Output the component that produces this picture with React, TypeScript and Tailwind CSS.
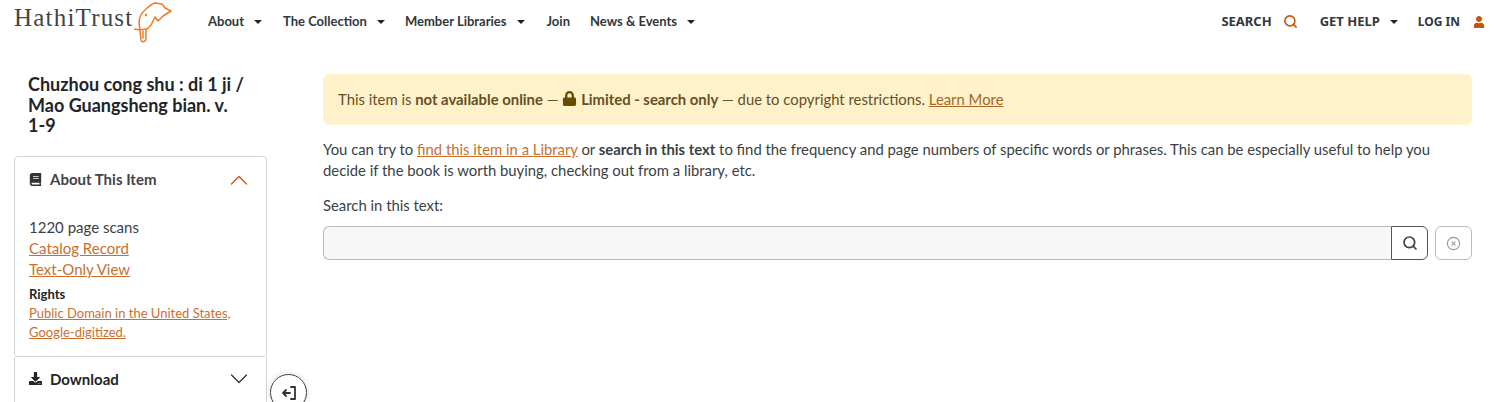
import { Search } from "lucide-react";
import { FaBook, FaDownload, FaLock, FaUser } from "react-icons/fa";

function Caret() {
  return <span className="ml-[10px] inline-block h-0 w-0 border-x-[4px] border-t-[4px] border-x-transparent border-t-[#212529]" />;
}

function NavItem({ label, caret = true, className = "" }: { label: string; caret?: boolean; className?: string }) {
  return (
    <span className={`flex items-center text-[13px] font-bold text-[#32373b] whitespace-nowrap ${className}`}>
      {label}
      {caret && <Caret />}
    </span>
  );
}

function Chevron({ up = false, color }: { up?: boolean; color: string }) {
  return (
    <svg viewBox="0 0 18 10" className="h-[10px] w-[18px]" fill="none" stroke={color} strokeWidth="1.3" strokeLinecap="round" strokeLinejoin="round">
      <path d={up ? "M1.5 9 9 1.5 16.5 9" : "M1.5 1 9 8.5 16.5 1"} />
    </svg>
  );
}

function Elephant() {
  return (
    <svg viewBox="0 0 38 42" className="h-[42px] w-[38px]" fill="none" stroke="#f27a26" strokeWidth="1.5" strokeLinejoin="round" strokeLinecap="round">
      <path d="M6 28 C4 20 6 13 11 9 C14 6 17 3 21 2 L28 3 L31 7 L37 10 L29 15 L24 20 L21 16 L17 24 L12 29 L12 37 C12 41 8 42 7 39 L6 29" />
      <path d="M0 28 C4 29 8 29 12 28" />
      <path d="M9 30 L9 37" />
      <circle cx="12" cy="14" r="0.5" />
    </svg>
  );
}

export default function App() {
  return (
    <div className="h-[402px] overflow-hidden bg-white font-['Lato','Noto_Sans',sans-serif] text-[#333]">
      {/* header */}
      <header className="flex h-[42px] items-start justify-between pl-[14px] pr-[15px]">
        <div className="flex items-start">
          <a className="flex items-start pt-[1px]">
            <span className="mt-[2px] w-[120px] font-['Liberation_Serif',serif] text-[25px] leading-[30px] tracking-[1.2px] text-[#444] whitespace-nowrap">HathiTrust</span>
            <Elephant />
          </a>
          <nav className="ml-[36px] mt-[12px] flex items-center gap-[20px]">
            <NavItem label="About" />
            <NavItem label="The Collection" className="ml-[1px]" />
            <NavItem label="Member Libraries" />
            <NavItem label="Join" caret={false} className="ml-[2px]" />
            <NavItem label="News & Events" />
          </nav>
        </div>
        <div className="mt-[12px] flex items-center font-['Noto_Sans',sans-serif] text-[13px] font-bold text-[#32373b]">
          <span>SEARCH</span>
          <Search className="ml-[11px] h-[15px] w-[15px] text-[#c4570e]" strokeWidth={2.5} />
          <span className="ml-[22px] flex items-center">GET HELP<Caret /></span>
          <span className="ml-[20px] text-[12px]">LOG IN</span>
          <FaUser className="ml-[13px] text-[12px] text-[#c4570e]" />
        </div>
      </header>

      <div className="flex">
        {/* sidebar */}
        <aside className="relative w-[267px] shrink-0 pl-[14px] pt-[32px]">
          <h1 className="pl-[14px] pr-[20px] text-[18px] font-bold leading-[20.5px] text-[#212529]">
            Chuzhou cong shu : di 1 ji / Mao Guangsheng bian. v. <span className="whitespace-nowrap">1-9</span>
          </h1>
          <div className="mt-[20px] h-[201px] rounded-[4px] border border-[#d5d5d5] px-[14px]">
            <div className="flex h-[46px] items-center justify-between">
              <span className="flex items-center gap-[8px] text-[15px] font-bold text-[#444]">
                <FaBook className="text-[13px] text-[#333]" />
                About This Item
              </span>
              <span className="mr-[4px]"><Chevron up color="#c4570e" /></span>
            </div>
            <div className="mt-[14px] text-[15px] leading-[21px] text-[#3a3f44]">
              <div>1220 page scans</div>
              <a className="block text-[#c9702f] underline">Catalog Record</a>
              <a className="block text-[#c9702f] underline">Text-Only View</a>
              <div className="mt-[4px] text-[13px] font-bold leading-[20px] text-[#212529]">Rights</div>
              <a className="block text-[13px] leading-[19px] text-[#c9702f] underline">
                Public Domain in the United States, Google-digitized.
              </a>
            </div>
          </div>
          <div className="flex h-[60px] items-start justify-between border-x border-[#d5d5d5] px-[14px] pt-[11px]">
            <span className="flex items-center gap-[8px] text-[15px] font-bold text-[#212529]">
              <FaDownload className="text-[13px]" />
              Download
            </span>
            <span className="mr-[4px] mt-[6px]"><Chevron color="#333" /></span>
          </div>
          <button className="absolute left-[270px] top-[332px] flex h-[37px] w-[37px] items-center justify-center rounded-full border border-[#444] bg-white shadow-[0_0_6px_rgba(0,0,0,0.15)]">
            <svg viewBox="0 0 16 16" className="h-[16px] w-[16px]" fill="none" stroke="#333" strokeWidth="1.8" strokeLinecap="round" strokeLinejoin="round">
              <path d="M9 8H2M5 5 2 8l3 3M10 2h4v12h-4" />
            </svg>
          </button>
        </aside>

        {/* main */}
        <main className="ml-[56px] mt-[32px] w-[1149px] text-[14.85px] leading-[21px] text-[#3a3f44]">
          <div className="flex h-[51px] items-center rounded-[6px] border border-[#fff3cd] bg-[#fff1c9] px-[14px] text-[#665026]">
            <span>
              This item is <b>not available online</b> — <FaLock className="inline align-[-1px] text-[15px] text-[#664d03]" /> <b>Limited - search only</b> — due to copyright restrictions. <a className="text-[#a8651f] underline">Learn More</a>
            </span>
          </div>
          <p className="mt-[14px]">
            You can try to <a className="text-[#c9702f] underline">find this item in a Library</a> or <b>search in this text</b> to find the frequency and page numbers of specific words or phrases. This can be especially useful to help you decide if the book is worth buying, checking out from a library, etc.
          </p>
          <div className="mt-[14px]">Search in this text:</div>
          <div className="mt-[10px] flex h-[34px] items-stretch">
            <div className="flex-1 rounded-l-[6px] border border-r-0 border-[#bbb] bg-[#f7f7f7]" />
            <button className="flex w-[37px] items-center justify-center rounded-r-[6px] border border-[#555] bg-white">
              <Search className="h-[16px] w-[16px] text-[#444]" strokeWidth={2.6} />
            </button>
            <button className="ml-[7px] flex w-[37px] items-center justify-center rounded-[6px] border border-[#bbb] bg-white">
              <svg viewBox="0 0 16 16" className="h-[15px] w-[15px]" fill="none" stroke="#999" strokeWidth="1.2">
                <circle cx="8" cy="8" r="6.5" />
                <path d="M6 6l4 4M10 6l-4 4" />
              </svg>
            </button>
          </div>
        </main>
      </div>
    </div>
  );
}
